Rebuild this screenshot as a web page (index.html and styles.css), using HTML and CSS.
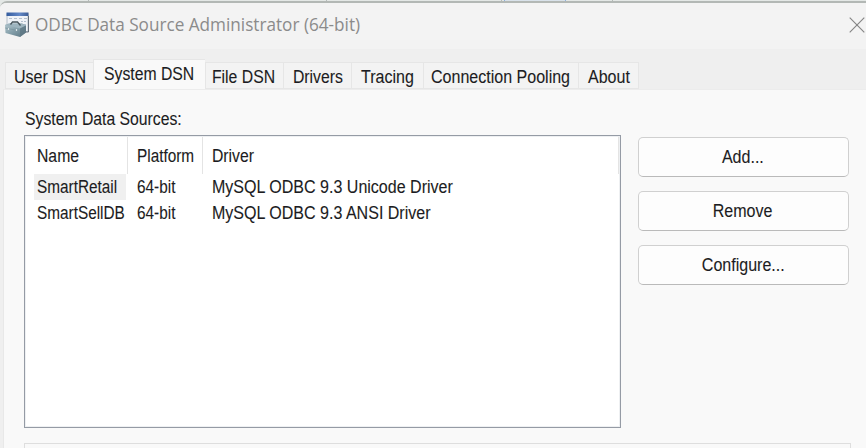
FILE: index.html
```html
<!DOCTYPE html>
<html lang="en">
<head>
<meta charset="utf-8">
<title>ODBC Data Source Administrator (64-bit)</title>
<link rel="stylesheet" href="styles.css">
</head>
<body>
<div class="backdrop"><i class="mark m1"></i><i class="mark m2"></i><i class="mark m3"></i><i class="mark m4"></i><i class="mark m5"></i></div>
<main class="window">
  <header class="titlebar">
    <svg class="app-icon" width="25" height="26" viewBox="0 0 25 26">
      <defs>
        <linearGradient id="bar" x1="0" x2="1"><stop offset="0" stop-color="#345c9e"/><stop offset=".6" stop-color="#6288c7"/><stop offset="1" stop-color="#3c5c94"/></linearGradient>
        <linearGradient id="box" x1="0" y1="0" x2="1" y2="1"><stop offset="0" stop-color="#b4c8cf"/><stop offset=".5" stop-color="#829da8"/><stop offset="1" stop-color="#5a7480"/></linearGradient>
      </defs>
      <path d="M2 2.5h21v18H2z" fill="#f0f3f7" stroke="#b4bec8"/>
      <path d="M1.5 1.500h22v3.500h-22z" fill="url(#bar)"/>
      <path d="M4 7.500h3m2 0h3m2 0h3m2 0h3M16 10.500h2m1 0h2M18 13.500h3" stroke="#b4c0cf" stroke-width="1.200"/>
      <path d="M23.500 5v16h-3" fill="none" stroke="#66717c"/>
      <path d="M0 14l4-1.500h13l4 2v7l-6 4.500L.5 22z" fill="url(#box)"/>
      <path d="M0 14l4-1.500h13l4 2-6 3z" fill="#9db4be"/>
      <path d="M.3 17l14.700 3 6-3.500" fill="none" stroke="#7b949e" stroke-width=".8"/>
      <path d="M15 17.500v8.500l6-4.500v-7z" fill="#5b7581" opacity=".7"/>
      <path d="M5.500 13.500l2-2.500h5l3 3.500" fill="none" stroke="#46545b" stroke-width="1.300"/>
      <path d="M3.500 17v2m8-1v2" stroke="#dce6e9" stroke-width="1.200"/>
    </svg>
    <h1 class="caption">ODBC Data Source Administrator (64-bit)</h1>
    <svg class="close" width="16" height="16" viewBox="0 0 16 16"><path d="M.7.7l14.600 14.600M15.300.7L.7 15.300" stroke="#858585" stroke-width="1.150"/></svg>
  </header>
  <nav class="tabs">
    <div class="tab user"><span class="t">User DSN</span></div>
    <div class="tab system selected"><span class="t narrow">System DSN</span></div>
    <div class="tab file"><span class="t narrow">File DSN</span></div>
    <div class="tab drivers"><span class="t narrow">Drivers</span></div>
    <div class="tab tracing"><span class="t">Tracing</span></div>
    <div class="tab pooling"><span class="t">Connection Pooling</span></div>
    <div class="tab about"><span class="t">About</span></div>
  </nav>
  <section class="panel">
    <div class="label"><span class="t narrow">System Data Sources:</span></div>
    <div class="content">
      <div class="list">
        <div class="row head">
          <div class="cell name"><span class="t narrow">Name</span></div>
          <div class="cell platform"><span class="t tight">Platform</span></div>
          <div class="cell driver"><span class="t narrow">Driver</span></div>
        </div>
        <div class="row">
          <div class="cell name active"><span class="t tight">SmartRetail</span></div>
          <div class="cell platform"><span class="t tight">64-bit</span></div>
          <div class="cell driver"><span class="t">MySQL ODBC 9.3 Unicode Driver</span></div>
        </div>
        <div class="row">
          <div class="cell name"><span class="t tight">SmartSellDB</span></div>
          <div class="cell platform"><span class="t tight">64-bit</span></div>
          <div class="cell driver"><span class="t">MySQL ODBC 9.3 ANSI Driver</span></div>
        </div>
      </div>
      <div class="actions">
        <button class="btn"><span class="t">Add...</span></button>
        <button class="btn"><span class="t">Remove</span></button>
        <button class="btn"><span class="t">Configure...</span></button>
      </div>
    </div>
    <div class="group"></div>
  </section>
</main>
</body>
</html>
```
FILE: styles.css
```css
* { box-sizing: border-box; }
body {
  margin: 0;
  width: 866px;
  height: 448px;
  overflow: hidden;
  background: #e4e8e6;
  font: 17.5px/20px "Liberation Sans", Arial, sans-serif;
  color: #1c1c22;
}
.backdrop { height: 1px; display: flex; }
.mark { width: 1px; height: 1px; background: #b5bbb8; }
.m1 { margin-left: 88px; }
.m2 { margin-left: 237px; }
.m3 { margin-left: 174px; }
.m4 {
  width: 62px;
  margin-left: 2px;
  background: #d9e2ea;
  border: 1px solid #8fb2df;
  border-width: 0 1px;
}
.m5 { margin-left: 46px; }
.window {
  height: 447px;
  border-top: 2px solid #b3b8b5;
  border-top-left-radius: 7px;
  background: #efefef;
  overflow: hidden;
}
.titlebar {
  height: 46px;
  background: #f3f3f3;
  display: flex;
  align-items: flex-start;
  padding: 8px 1px 0 5px;
}
.app-icon { flex: none; }
.caption {
  margin: 1px 0 0 5px;
  font: 400 18px/24px "Open Sans", "Noto Sans", sans-serif;
  color: #8b8b8b;
  white-space: nowrap;
  transform: scaleX(.953);
  transform-origin: 0 0;
}
.close { margin: 6px 0 0 auto; flex: none; }
.t {
  display: inline-block;
  white-space: nowrap;
  transform: scaleX(.916);
  transform-origin: 0 50%;
  -webkit-text-stroke: .1px #1c1c22;
}
.t.narrow { transform: scaleX(.9); }
.t.tight { transform: scaleX(.877); }
.tabs {
  height: 40px;
  padding-left: 5px;
  display: flex;
  align-items: flex-end;
}
.tab {
  height: 27px;
  padding: 4px 0 0 8px;
  background: #f3f3f3;
  border: 1px solid #e6e6e6;
  border-right: 0;
}
.tab.selected {
  height: 30px;
  padding: 4px 0 0 10px;
  background: #f9f9f9;
  border-bottom: 0;
}
.user { width: 88px; }
.system { width: 112px; }
.file { width: 78px; padding-left: 6px; }
.drivers { width: 68px; padding-left: 9px; }
.tracing { width: 72px; padding-left: 9px; }
.pooling { width: 155px; padding-left: 7px; }
.about { width: 61px; padding-left: 9px; border-right: 1px solid #e6e6e6; }
.panel {
  height: 359px;
  margin-left: 3px;
  padding: 19px 0 0 20px;
  background: #f9f9f9;
  border-left: 1px solid #e8e8e8;
  border-top: 1px solid #ececec;
}
.label { height: 26px; padding-left: 1px; }
.content { display: flex; gap: 17px; }
.list {
  width: 597px;
  height: 293px;
  padding: 1px 1px 0 9px;
  background: #fff;
  border: 1.5px solid #959ba5;
  box-shadow: inset 0 0 0 1px #eef0f2;
}
.row { display: flex; height: 26px; }
.cell { padding: 3px 0 0 9px; }
.name { width: 94px; padding-left: 3px; }
.platform { width: 75px; }
.driver { flex: 1; }
.active { background: linear-gradient(90deg, #f0f0f0, #f0f0f0) 0 0 / 92px 26px no-repeat; }
.head { height: 37px; }
.head .cell { padding-top: 9px; border-right: 1px solid #e4e4e4; }
.actions { display: flex; flex-direction: column; gap: 14px; padding-top: 2px; }
.btn {
  width: 211px;
  height: 40px;
  padding: 0 1px 0 0;
  font: inherit;
  color: inherit;
  background: #fdfdfd;
  border: 1px solid #d0d0d0;
  border-bottom-color: #bababa;
  border-radius: 5px;
}
.btn .t { transform-origin: 50% 50%; }
.group {
  width: 827px;
  height: 20px;
  margin-top: 15px;
  border: 1px solid #dedede;
}
```
